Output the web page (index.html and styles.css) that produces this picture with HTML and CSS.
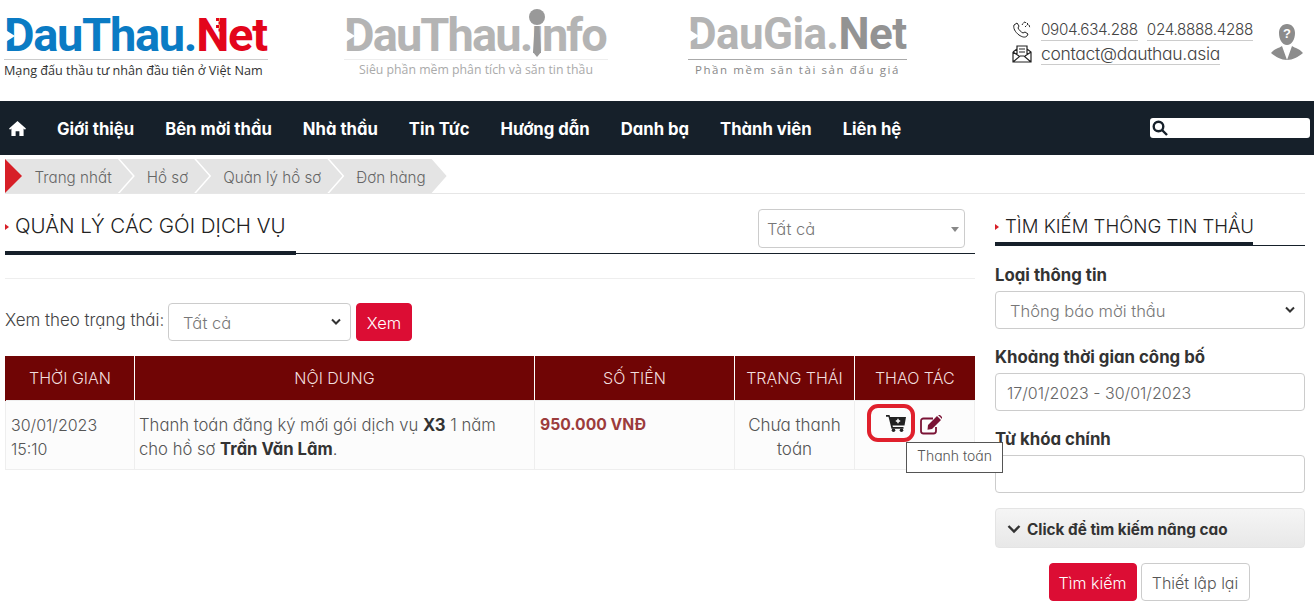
FILE: index.html
```html
<!DOCTYPE html>
<html lang="vi">
<head>
<meta charset="utf-8">
<title>Quản lý các gói dịch vụ</title>
<link rel="stylesheet" href="styles.css">
</head>
<body>
<header class="top">
  <a class="brand brand-main">
    <span class="logo logo-main"><span class="d-notch"></span><span class="blue">DauThau.</span><span class="red">Net</span>
      <svg class="n-dots" viewBox="0 0 10 14"><path fill="#e3051b" d="M1 0h3v3H1zM6 0h3v3H6zM3.500 3.500h3v3h-3zM1 7h3v3H1zM6 7h3v3H6zM3.500 10.500h3v3h-3z"/></svg>
    </span>
    <span class="tag tag-main">Mạng đấu thầu tư nhân đầu tiên ở Việt Nam</span>
  </a>
  <a class="brand brand-info">
    <span class="logo logo-info grey"><span class="d-notch"></span>DauThau.info
      <span class="tie-dot"></span><span class="tie"></span>
    </span>
    <span class="tag tag-info">Siêu phần mềm phân tích và săn tin thầu</span>
  </a>
  <a class="brand brand-gia">
    <span class="logo logo-gia grey"><span class="d-notch"></span>DauGia.<span class="darkgrey">Net</span></span>
    <span class="tag tag-gia">Phần mềm săn tài sản đấu giá</span>
  </a>
  <div class="contact">
    <div class="contact-row phones">
      <svg class="c-icon" viewBox="0 0 20 20" fill="none" stroke="#222" stroke-width="1"><path d="M2 5c-1 3 1 7 5 10 3 2 6 3 8 1l1-2-3-2-2 1c-2-1-4-3-5-5l1-2-2-3z"/><path d="M10 5l2-3M13 7l3-3M12 2l3 1 2 2 1 3" stroke-dasharray="2 1"/></svg>
      <span class="link">0904.634.288</span><span class="link">024.8888.4288</span>
    </div>
    <div class="contact-row email">
      <svg class="c-icon" viewBox="0 0 20 20" fill="none" stroke="#222" stroke-width="1.200"><path d="M1 8v10h18V8l-4-3M1 8l4-3M5 11V2h10v9M1 18l7-6h4l7 6M1 8l6 4M19 8l-6 4M7 5h6M7 8h6"/></svg>
      <span class="link">contact@dauthau.asia</span>
    </div>
  </div>
  <svg class="avatar" viewBox="0 0 32 36"><path fill="#8c8c8c" d="M16 0c5 0 8 4 8 9 0 6-3 12-8 12S8 15 8 9c0-5 3-9 8-9zM0 29c3-4 8-5 11-7l5 14 5-14c3 2 8 3 11 7-5 4-10 7-16 7S5 33 0 29z"/><text x="16" y="14" class="avatar-q">?</text></svg>
</header>

<nav class="nav">
  <svg class="home" viewBox="0 0 18 16"><path fill="#fff" d="M9 0l9 8-1 1.200-1.500-1.200V16h-4.500v-5H7v5H2.500V8L1 9.200 0 8z"/></svg>
  <ul class="menu">
    <li>Giới thiệu</li><li>Bên mời thầu</li><li>Nhà thầu</li><li>Tin Tức</li><li>Hướng dẫn</li><li>Danh bạ</li><li>Thành viên</li><li>Liên hệ</li>
  </ul>
  <div class="nav-search">
    <svg class="search-ic" viewBox="0 0 16 16" fill="none" stroke="#16202a" stroke-width="2.400"><circle cx="6.500" cy="6.500" r="4.800"/><path d="M10 10l5 5"/></svg>
  </div>
</nav>

<div class="crumbs">
  <span class="crumb crumb-first">Trang nhất<span class="crumb-start"></span></span>
  <span class="crumb">Hồ sơ</span>
  <span class="crumb">Quản lý hồ sơ</span>
  <span class="crumb">Đơn hàng</span>
</div>

<div class="page">
  <main class="main">
    <div class="title-row">
      <h1 class="title title-main">QUẢN LÝ CÁC GÓI DỊCH VỤ</h1>
      <div class="fake-select select-all">Tất cả<span class="caret"></span></div>
    </div>
    <hr class="rule">
    <div class="filter">
      <span class="filter-label">Xem theo trạng thái:</span>
      <div class="fake-select select-status">Tất cả<svg class="chev" viewBox="0 0 12 8" fill="none" stroke="#333" stroke-width="2"><path d="M2 1.500l4 4 4-4"/></svg></div>
      <button class="btn btn-red btn-xem">Xem</button>
    </div>
    <table class="table">
      <thead>
        <tr><th class="c1">THỜI GIAN</th><th class="c2">NỘI DUNG</th><th class="c3">SỐ TIỀN</th><th class="c4">TRẠNG THÁI</th><th class="c5">THAO TÁC</th></tr>
      </thead>
      <tbody>
        <tr>
          <td class="time">30/01/2023 15:10</td>
          <td class="desc">Thanh toán đăng ký mới gói dịch vụ <b>X3</b> 1 năm cho hồ sơ <b>Trần Văn Lâm</b>.</td>
          <td class="money">950.000 VNĐ</td>
          <td class="center">Chưa thanh toán</td>
          <td class="actions">
            <span class="cart-ring">
              <svg class="cart" viewBox="0 0 20 18"><path fill="#222" d="M0 1h3.500l.6 2H20l-1.500 8.500H6.500l.4 1.500H17.500v1.700H5.500L2.500 2.700H0z"/><circle cx="7.500" cy="16.200" r="1.800" fill="#222"/><circle cx="15.500" cy="16.200" r="1.800" fill="#222"/><path stroke="#fff" stroke-width="1.400" d="M12 4.800v4.400M9.800 7h4.400"/></svg>
            </span>
            <svg class="edit" viewBox="0 0 22 20" fill="none"><path stroke="#7a1335" stroke-width="1.800" d="M16 12v4a2.500 2.500 0 0 1-2.500 2.500h-10A2.500 2.500 0 0 1 1 16V6a2.500 2.500 0 0 1 2.500-2.500H13"/><path fill="#7a1335" d="M8 10L17 1l4 4-9 9-4.500 .8zM18 0l4 4 .5-1.500L20 0z"/></svg>
            <span class="tooltip">Thanh toán</span>
          </td>
        </tr>
      </tbody>
    </table>
  </main>

  <aside class="side">
    <h2 class="title title-side">TÌM KIẾM THÔNG TIN THẦU</h2>
    <label class="field-label label-first">Loại thông tin</label>
    <div class="fake-select side-select">Thông báo mời thầu<svg class="chev" viewBox="0 0 12 8" fill="none" stroke="#333" stroke-width="2"><path d="M2 1.500l4 4 4-4"/></svg></div>
    <label class="field-label">Khoảng thời gian công bố</label>
    <div class="input">17/01/2023 - 30/01/2023</div>
    <label class="field-label">Từ khóa chính</label>
    <div class="input"></div>
    <div class="advanced"><svg class="adv-chev" viewBox="0 0 14 10" fill="none" stroke="#333" stroke-width="2.400"><path d="M1.500 2l5.500 5.500L12.500 2"/></svg>Click để tìm kiếm nâng cao</div>
    <div class="side-btns">
      <button class="btn btn-red btn-find">Tìm kiếm</button>
      <button class="btn btn-white btn-reset">Thiết lập lại</button>
    </div>
  </aside>
</div>
</body>
</html>
```
FILE: styles.css
```css
* { box-sizing: border-box; }
html, body { margin: 0; padding: 0; }
body { width: 1314px; height: 605px; overflow: hidden; background: #fff; color: #333; font-family: Inter, Lato, "Liberation Sans", sans-serif; font-feature-settings: "cv11"; font-weight: 300; font-size: 16px; }

.top { height: 101px; display: flex; align-items: flex-start; }
.brand { display: flex; flex-direction: column; align-items: flex-start; flex: none; }
.brand-main { margin: 10px 0 0 4px; width: 340px; }
.brand-info { width: 344px; margin-top: 10px; }
.brand-gia { width: 324px; margin-top: 10px; }
.logo { position: relative; display: block; font-family: Roboto, "Liberation Sans", sans-serif; font-feature-settings: normal; font-weight: 700; font-size: 47px; line-height: 49px; height: 49px; white-space: nowrap; }
.logo-main { letter-spacing: -1.300px; }
.logo-info { letter-spacing: -1.900px; }
.logo-gia { font-size: 44px; letter-spacing: -.6px; }
.blue { color: #0a7bc4; }
.red { color: #e3051b; }
.grey { color: #b4b4b4; }
.darkgrey { color: #939393; }
.d-notch { position: absolute; left: 0; top: 19px; border-left: 11px solid #fff; border-top: 7px solid transparent; border-bottom: 7px solid transparent; z-index: 1; }
.n-dots { position: absolute; left: 211px; top: 8px; width: 10px; height: 14px; }
.tie-dot { position: absolute; left: 185px; top: -1px; width: 16px; height: 16px; border-radius: 50%; background: #999; }
.tie { position: absolute; left: 189px; top: 16px; width: 8px; height: 31px; background: #999; clip-path: polygon(20% 0, 80% 0, 100% 85%, 50% 100%, 0 85%); }
.tag { display: block; font-family: "Open Sans", "Liberation Sans", sans-serif; font-feature-settings: normal; font-weight: 400; font-size: 12.650px; line-height: 20px; white-space: nowrap; border-top: 1px solid #ccc; }
.tag-main { color: #333; width: 264px; }
.tag-info { color: #aaa; width: 264px; text-align: center; font-size: 12.300px; border-top-color: #eee; }
.tag-gia { color: #888; width: 219px; text-align: center; font-size: 11.500px; letter-spacing: 1.600px; border-top-color: #aaa; }

.contact { margin-top: 18px; width: 259px; flex: none; color: #444; }
.contact-row { display: flex; align-items: center; gap: 9px; height: 24px; }
.phones { font-size: 15.200px; }
.email { font-size: 17.500px; }
.c-icon { width: 20px; height: 20px; flex: none; }
.link { border-bottom: 1px solid #ccc; line-height: 21px; letter-spacing: -.3px; white-space: nowrap; }
.avatar { width: 32px; height: 36px; margin-top: 24px; flex: none; }
.avatar-q { font: 700 13px "Liberation Sans", sans-serif; fill: #fff; text-anchor: middle; }

.nav { height: 54px; background: #16202a; display: flex; align-items: center; padding-left: 9px; }
.home { width: 17px; height: 15px; flex: none; }
.menu { list-style: none; display: flex; gap: 31px; margin: 0 0 0 31px; padding: 1px 0 0; color: #fff; font-weight: 700; font-size: 16.700px; white-space: nowrap; }
.nav-search { margin-left: auto; margin-right: 4px; width: 160px; height: 20px; background: #fff; border-radius: 3px; display: flex; align-items: center; padding-left: 2px; }
.search-ic { width: 16px; height: 16px; }

.crumbs { margin: 4px 9px 0 5px; height: 35px; border-bottom: 1px solid #e6e6e6; display: flex; color: #666; font-size: 15.200px; }
.crumb { position: relative; height: 34px; background: #e4e4e4; display: flex; align-items: center; padding: 2px 21px 0 27px; margin-left: -13px; white-space: nowrap; clip-path: polygon(0 0, calc(100% - 15px) 0, 100% 50%, calc(100% - 15px) 100%, 0 100%, 15px 50%); }
.crumb-first { margin-left: 0; padding-left: 29.500px; clip-path: polygon(0 0, calc(100% - 15px) 0, 100% 50%, calc(100% - 15px) 100%, 0 100%); }
.crumb-start { position: absolute; left: 0; top: 0; width: 17px; height: 34px; background: #d71f27; clip-path: polygon(0 0, 100% 50%, 0 100%); }

.page { display: flex; padding: 0 9px 0 5px; gap: 20px; }
.main { width: 970px; flex: none; }
.side { width: 310px; flex: none; padding-top: 15px; }

.title-row { display: flex; justify-content: space-between; align-items: flex-start; margin-top: 15px; border-bottom: 1px solid #16202a; height: 45px; }
.title { position: relative; margin: 0; font-weight: 300; color: #222; font-size: 20.500px; line-height: 35px; white-space: nowrap; padding-left: 10px; }
.title::before { content: ""; position: absolute; left: 0; top: 15px; border-left: 4px solid #d71f27; border-top: 3.500px solid transparent; border-bottom: 3.500px solid transparent; }
.title::after { content: ""; position: absolute; left: 0; height: 4px; background: #16202a; }
.title-main { width: 291px; height: 45px; line-height: 33px; }
.title-main::after { width: 291px; bottom: -1px; }
.title-side { height: 37px; border-bottom: 1px solid #16202a; font-size: 18.600px; }
.title-side::after { width: 258px; bottom: -1px; }

.fake-select { border: 1px solid #ccc; border-radius: 4px; background: #fff; color: #777; display: flex; align-items: center; position: relative; white-space: nowrap; padding-top: 1px; font-size: 16.500px; }
.select-all { width: 207px; height: 39px; padding-left: 8px; margin-right: 10px; }
.caret { position: absolute; right: 5px; top: 17px; border-top: 5px solid #888; border-left: 4px solid transparent; border-right: 4px solid transparent; }
.chev { position: absolute; right: 8px; top: 50%; margin-top: -4px; width: 12px; height: 8px; }
.rule { border: 0; border-top: 1px solid #eee; margin: 24px 0 0; }
.filter { display: flex; align-items: center; margin-top: 24px; }
.filter-label { color: #444; margin-top: -4px; width: 163px; white-space: nowrap; font-size: 16.900px; }
.select-status { width: 183px; height: 38px; padding-left: 14px; }
.btn { height: 38px; border-radius: 4px; font: inherit; padding: 1px 0 0; cursor: pointer; }
.btn-xem { width: 56px; margin-left: 5px; font-size: 16.500px; }
.btn-find { width: 88px; }
.btn-reset { width: 109px; }
.btn-red { background: #dc0d34; color: #fff; border: 1px solid #dc0d34; }
.btn-white { background: #fff; color: #555; border: 1px solid #ccc; }

.table { width: 969px; table-layout: fixed; border-collapse: collapse; margin-top: 15px; }
.table th { background: #700505; color: #f2dede; font-weight: 300; height: 44px; padding: 0; border-right: 1px solid #fff; }
.table th:first-child { border-left: 1px solid #700505; }
.table th:last-child { border-right: 0; }
.c1 { width: 129px; } .c2 { width: 400px; } .c3 { width: 200px; } .c4 { width: 120px; } .c5 { width: 120px; }
.table td { height: 69px; padding: 12px 5px 0; line-height: 24px; font-size: 17px; color: #555; background: #fcfcfc; border: 1px solid #eee; vertical-align: top; }
.table .time { font-size: 16px; }
.table .desc { padding-left: 4px; font-size: 16.650px; }
.table td b { color: #333; font-weight: 700; }
.table .money { color: #9c3c3c; font-weight: 700; font-size: 15.700px; }
.center { text-align: center; }
.table .actions { position: relative; }
.cart-ring { position: absolute; left: 12px; top: 3px; width: 48px; height: 38px; border: 4.500px solid #e0202c; border-radius: 11px; display: flex; align-items: center; justify-content: center; padding-left: 10px; }
.cart { width: 20px; height: 18px; }
.edit { position: absolute; left: 65px; top: 14px; width: 22px; height: 20px; }
.tooltip { position: absolute; left: 51px; top: 41px; width: 97px; height: 31px; background: #fff; border: 1px solid #555; color: #555; font-size: 14px; line-height: 1; display: flex; align-items: center; padding: 0 0 2px 10px; z-index: 2; white-space: nowrap; }

.field-label { display: block; font-weight: 700; color: #333; font-size: 16.800px; line-height: 24px; margin-top: 16px; white-space: nowrap; }
.label-first { margin-top: 17px; }
.side-select { height: 38px; padding-left: 14px; margin-top: 4px; }
.input { height: 38px; border: 1px solid #ccc; border-radius: 4px; padding: 1px 0 0 11px; display: flex; align-items: center; color: #666; margin-top: 4px; }
.advanced { height: 40px; margin-top: 15px; background: linear-gradient(#f5f5f5, #e8e8e8); border: 1px solid #e4e4e4; border-radius: 4px; display: flex; align-items: center; padding: 2px 0 0 11px; gap: 6px; font-weight: 700; font-size: 15.300px; color: #333; white-space: nowrap; }
.adv-chev { width: 14px; height: 10px; }
.side-btns { display: flex; justify-content: center; gap: 4px; margin-top: 15px; padding-right: 2px; }
```
